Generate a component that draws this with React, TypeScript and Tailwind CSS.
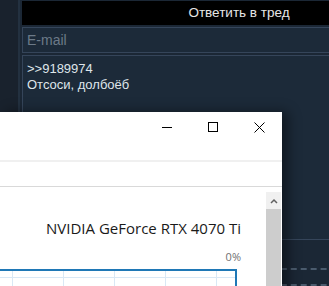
import React from 'react';

const gridCols = [12, 63, 114, 165, 216];

function WinButton({ children }: { children: React.ReactNode }) {
  return (
    <div className="flex h-[30px] w-[46px] items-center justify-center">
      {children}
    </div>
  );
}

export default function App() {
  return (
    <div className="relative h-[286px] w-[329px] overflow-hidden bg-[#1b2735] font-['Liberation_Sans',sans-serif]">
      {/* Board reply form */}
      <div className="flex h-full">
        <div className="w-[18px] shrink-0 bg-[#19222d]" />
        <div className="w-[2px] shrink-0 bg-[#233140]" />
        <div className="w-[2px] shrink-0" />
        <div className="flex w-[434px] shrink-0 flex-col pt-[1px]">
          <div className="flex h-[24px] shrink-0 items-center justify-center bg-black text-[13.5px] text-[#e6e6e6]">
            Ответить в тред
          </div>
          <div className="mt-[2px] flex h-[26px] shrink-0 items-center border border-[#35455a] bg-[#1c2a39] px-[4px] text-[14px] text-[#6c7a88]">
            E-mail
          </div>
          <div className="mt-[2px] h-[185px] shrink-0 border border-[#35455a] bg-[#1c2a39] px-[4px] pt-[5px] text-[13px] leading-[16px] text-[#dfe5ea]">
            <div>&gt;&gt;9189974</div>
            <div>Отсоси, долбоёб</div>
          </div>
          <div className="mt-[28px] shrink-0 border-t-2 border-dashed border-[#4a5b6d]" />
          <div className="mt-[14px] shrink-0 border-t-2 border-dashed border-[#4a5b6d]" />
        </div>
      </div>

      {/* Task manager window */}
      <div className="absolute left-0 top-[112px] flex w-[282px] flex-col bg-white shadow-[6px_0_12px_rgba(0,0,0,0.45)] font-['Open_Sans',sans-serif]">
        <div className="flex h-[48px] shrink-0 justify-end">
          <div className="flex h-[30px]">
            <WinButton>
              <svg width="10" height="10" viewBox="0 0 10 10">
                <path d="M0 5.5h10" stroke="#000" strokeWidth="1" />
              </svg>
            </WinButton>
            <WinButton>
              <svg width="10" height="10" viewBox="0 0 10 10">
                <rect x="0.5" y="0.5" width="9" height="9" fill="none" stroke="#000" strokeWidth="1" />
              </svg>
            </WinButton>
            <WinButton>
              <svg width="11" height="11" viewBox="0 0 11 11">
                <path d="M0.5 0.5l10 10M10.5 0.5l-10 10" stroke="#000" strokeWidth="1" />
              </svg>
            </WinButton>
          </div>
        </div>
        <div className="h-[2px] shrink-0 bg-[#f0f0f0]" />
        <div className="h-[24px] shrink-0" />
        <div className="h-px shrink-0 bg-[#d9d9d9]" />
        <div className="flex h-[120px] shrink-0 pt-[5px]">
          <div className="flex-1">
            <div className="flex w-[241px] flex-col items-end pt-[26px]">
              <div className="text-[15px] leading-[20px] text-[#1a1a1a]">NVIDIA GeForce RTX 4070 Ti</div>
              <div className="mt-[12px] text-[11px] leading-[14px] text-[#707070]">0%</div>
            </div>
            <div className="relative mt-[5px] h-[60px] w-[237px] border-r-2 border-t-2 border-[#1f78b6]">
              {gridCols.map((x) => (
                <div key={x} className="absolute top-0 h-full w-px bg-[#d9e8f5]" style={{ left: x }} />
              ))}
              <div className="absolute left-0 top-[6px] h-px w-full bg-[#d9e8f5]" />
            </div>
          </div>
          <div className="mr-px flex w-[15px] flex-col bg-[#cdcdcd]">
            <div className="flex h-[17px] items-center justify-center bg-[#f0f0f0]">
              <svg width="8" height="6" viewBox="0 0 8 6">
                <path d="M1 5l3-3 3 3" fill="none" stroke="#606060" strokeWidth="1.5" />
              </svg>
            </div>
          </div>
        </div>
      </div>
    </div>
  );
}
